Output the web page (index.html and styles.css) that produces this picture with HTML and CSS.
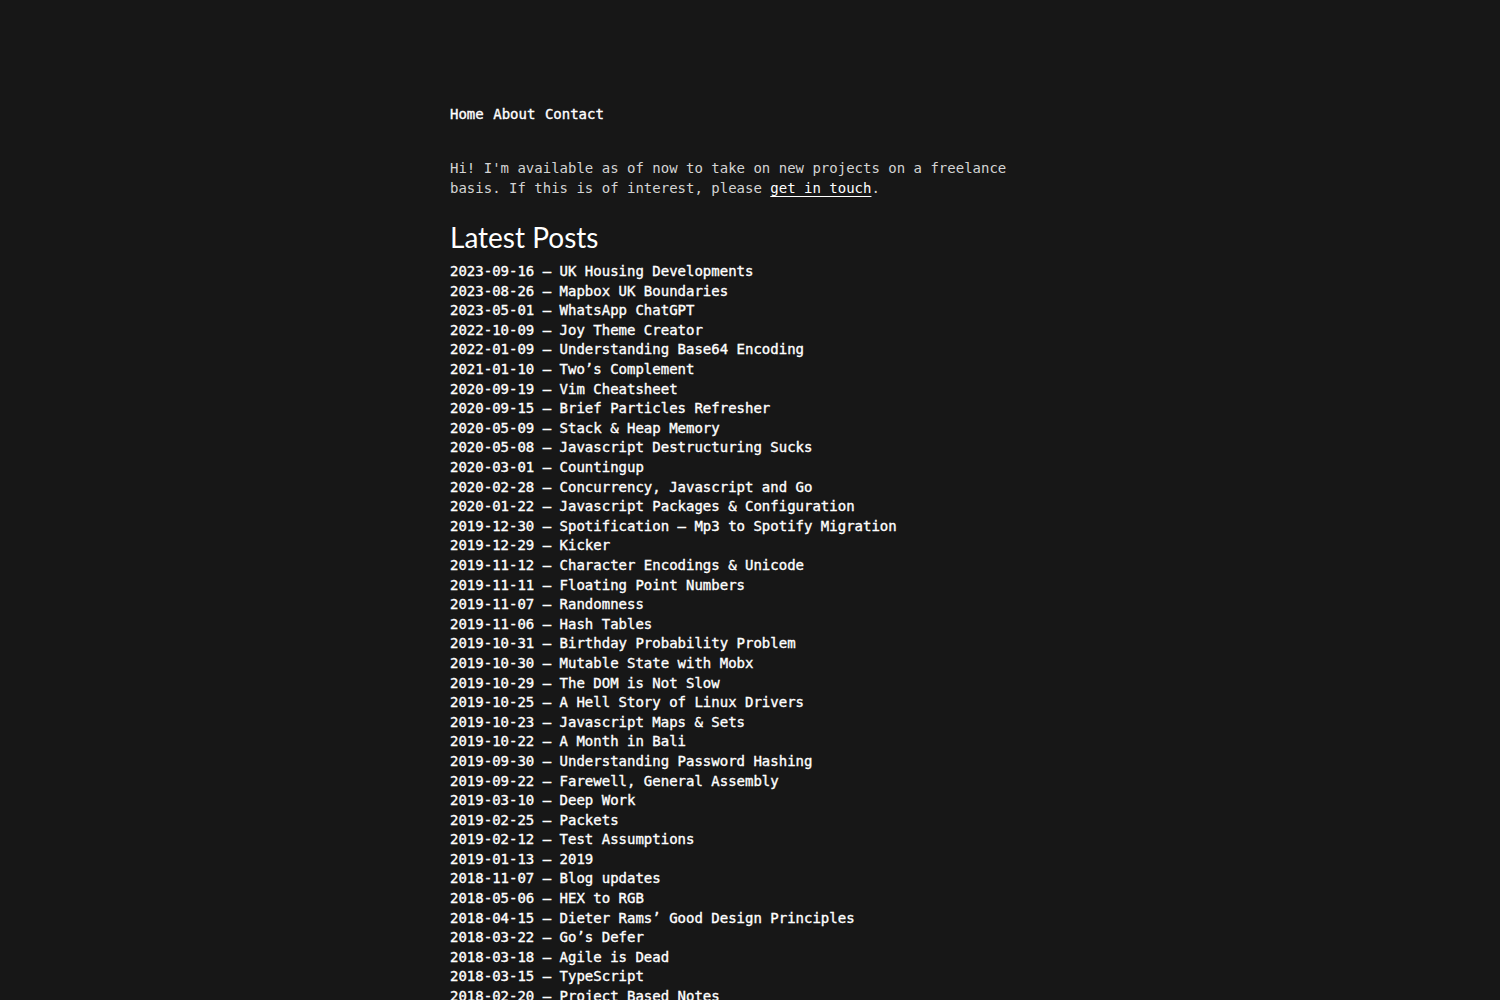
FILE: index.html
```html
<!DOCTYPE html>
<html lang="en">
<head>
<meta charset="utf-8">
<title>Blog</title>
<link rel="stylesheet" href="styles.css">
</head>
<body>
<div class="page">
  <nav class="nav">
    <a href="#">Home</a>
    <a href="#">About</a>
    <a href="#">Contact</a>
  </nav>
  <p class="intro">Hi! I'm available as of now to take on new projects on a freelance basis. If this is of interest, please <a href="#">get in touch</a>.</p>
  <h2 class="title">Latest Posts</h2>
  <ul class="posts">
    <li><a href="#">2023-09-16 — UK Housing Developments</a></li>
    <li><a href="#">2023-08-26 — Mapbox UK Boundaries</a></li>
    <li><a href="#">2023-05-01 — WhatsApp ChatGPT</a></li>
    <li><a href="#">2022-10-09 — Joy Theme Creator</a></li>
    <li><a href="#">2022-01-09 — Understanding Base64 Encoding</a></li>
    <li><a href="#">2021-01-10 — Two’s Complement</a></li>
    <li><a href="#">2020-09-19 — Vim Cheatsheet</a></li>
    <li><a href="#">2020-09-15 — Brief Particles Refresher</a></li>
    <li><a href="#">2020-05-09 — Stack &amp; Heap Memory</a></li>
    <li><a href="#">2020-05-08 — Javascript Destructuring Sucks</a></li>
    <li><a href="#">2020-03-01 — Countingup</a></li>
    <li><a href="#">2020-02-28 — Concurrency, Javascript and Go</a></li>
    <li><a href="#">2020-01-22 — Javascript Packages &amp; Configuration</a></li>
    <li><a href="#">2019-12-30 — Spotification — Mp3 to Spotify Migration</a></li>
    <li><a href="#">2019-12-29 — Kicker</a></li>
    <li><a href="#">2019-11-12 — Character Encodings &amp; Unicode</a></li>
    <li><a href="#">2019-11-11 — Floating Point Numbers</a></li>
    <li><a href="#">2019-11-07 — Randomness</a></li>
    <li><a href="#">2019-11-06 — Hash Tables</a></li>
    <li><a href="#">2019-10-31 — Birthday Probability Problem</a></li>
    <li><a href="#">2019-10-30 — Mutable State with Mobx</a></li>
    <li><a href="#">2019-10-29 — The DOM is Not Slow</a></li>
    <li><a href="#">2019-10-25 — A Hell Story of Linux Drivers</a></li>
    <li><a href="#">2019-10-23 — Javascript Maps &amp; Sets</a></li>
    <li><a href="#">2019-10-22 — A Month in Bali</a></li>
    <li><a href="#">2019-09-30 — Understanding Password Hashing</a></li>
    <li><a href="#">2019-09-22 — Farewell, General Assembly</a></li>
    <li><a href="#">2019-03-10 — Deep Work</a></li>
    <li><a href="#">2019-02-25 — Packets</a></li>
    <li><a href="#">2019-02-12 — Test Assumptions</a></li>
    <li><a href="#">2019-01-13 — 2019</a></li>
    <li><a href="#">2018-11-07 — Blog updates</a></li>
    <li><a href="#">2018-05-06 — HEX to RGB</a></li>
    <li><a href="#">2018-04-15 — Dieter Rams’ Good Design Principles</a></li>
    <li><a href="#">2018-03-22 — Go’s Defer</a></li>
    <li><a href="#">2018-03-18 — Agile is Dead</a></li>
    <li><a href="#">2018-03-15 — TypeScript</a></li>
    <li><a href="#">2018-02-20 — Project Based Notes</a></li>
    <li><a href="#">2018-02-12 — Reading List</a></li>
  </ul>
</div>
</body>
</html>
```

FILE: styles.css
```css
html, body {
  margin: 0;
  padding: 0;
  background: #171717;
}

body {
  font-family: "DejaVu Sans Mono", "Liberation Mono", monospace;
  font-size: 14px;
  line-height: 19.6px;
  color: #d0d0d0;
}

.page {
  width: 600px;
  margin: 0 auto;
  padding-top: 105px;
}

a {
  color: #ffffff;
  text-decoration: none;
}

.nav {
  display: flex;
  gap: 9.5px;
}

.nav a {
  color: #ffffff;
  -webkit-text-stroke: 0.35px #ffffff;
}

.intro {
  margin: 34.5px 0 0;
  color: #d4d4d4;
}

.intro a {
  text-decoration: underline;
  text-underline-offset: 3px;
}

.title {
  font-family: "Lato", "Noto Sans", sans-serif;
  font-weight: 400;
  font-size: 28px;
  line-height: 36px;
  color: #ffffff;
  margin: 21px 0 6.8px;
}

.posts {
  list-style: none;
  margin: 0;
  padding: 0;
}

.posts a {
  color: #ffffff;
  -webkit-text-stroke: 0.35px #ffffff;
}
```
